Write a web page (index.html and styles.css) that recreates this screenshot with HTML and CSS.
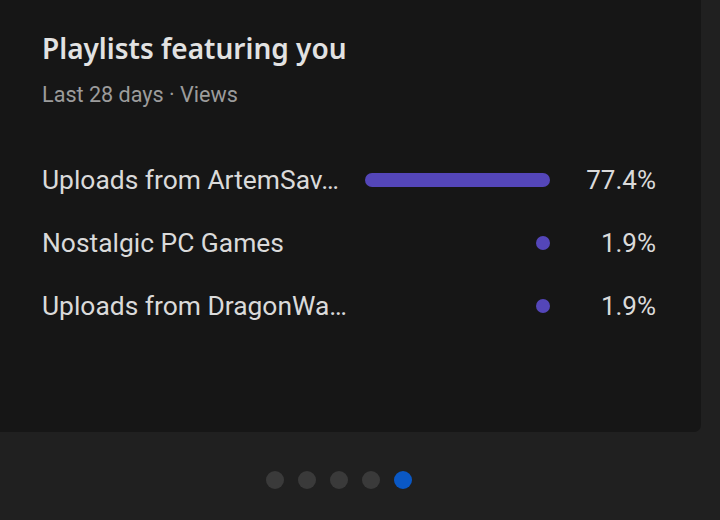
FILE: index.html
```html
<!DOCTYPE html>
<html>
<head>
<meta charset="utf-8">
<link rel="stylesheet" href="styles.css">
</head>
<body>
<div class="page">
  <section class="card">
    <h2 class="title">Playlists featuring you</h2>
    <div class="subtitle">Last 28 days · Views</div>
    <div class="rows">
      <div class="row">
        <div class="label">Uploads from ArtemSav…</div>
        <div class="track"><div class="bar" style="width:185px"></div></div>
        <div class="pct">77.4%</div>
      </div>
      <div class="row">
        <div class="label">Nostalgic PC Games</div>
        <div class="track"><div class="bar" style="width:14px"></div></div>
        <div class="pct">1.9%</div>
      </div>
      <div class="row">
        <div class="label">Uploads from DragonWa…</div>
        <div class="track"><div class="bar" style="width:14px"></div></div>
        <div class="pct">1.9%</div>
      </div>
    </div>
  </section>
  <div class="dots">
    <span class="dot"></span>
    <span class="dot"></span>
    <span class="dot"></span>
    <span class="dot"></span>
    <span class="dot active"></span>
  </div>
</div>
</body>
</html>
```

FILE: styles.css
```css
html, body {
  margin: 0;
  padding: 0;
  background: #202020;
  width: 720px;
  height: 520px;
  overflow: hidden;
}
.page {
  font-family: Roboto, "Liberation Sans", sans-serif;
}
.card {
  width: 701px;
  height: 432px;
  box-sizing: border-box;
  background: #161616;
  border-radius: 0 0 7px 0;
  padding: 30px 0 0 42px;
}
.title {
  margin: 0;
  font-family: "Noto Sans", sans-serif;
  font-weight: 600;
  font-size: 28px;
  line-height: 36px;
  color: #e2e2e2;
}
.subtitle {
  margin-top: 16px;
  font-size: 21.6px;
  line-height: 26px;
  color: #9c9c9c;
}
.rows {
  margin-top: 40px;
  display: flex;
  flex-direction: column;
}
.row {
  display: flex;
  align-items: center;
  height: 63px;
}
.label {
  width: 323px;
  font-size: 26.4px;
  color: #dadada;
  white-space: nowrap;
  overflow: hidden;
}
.track {
  width: 185px;
  display: flex;
  justify-content: flex-end;
}
.bar {
  height: 14px;
  border-radius: 7px;
  background: #5446b9;
}
.pct {
  width: 106px;
  text-align: right;
  font-size: 26px;
  color: #dadada;
}
.dots {
  display: flex;
  gap: 14px;
  padding: 39px 0 0 266px;
}
.dot {
  width: 18px;
  height: 18px;
  border-radius: 50%;
  background: #3a3a3a;
}
.dot.active {
  background: #0a58c5;
}
```
